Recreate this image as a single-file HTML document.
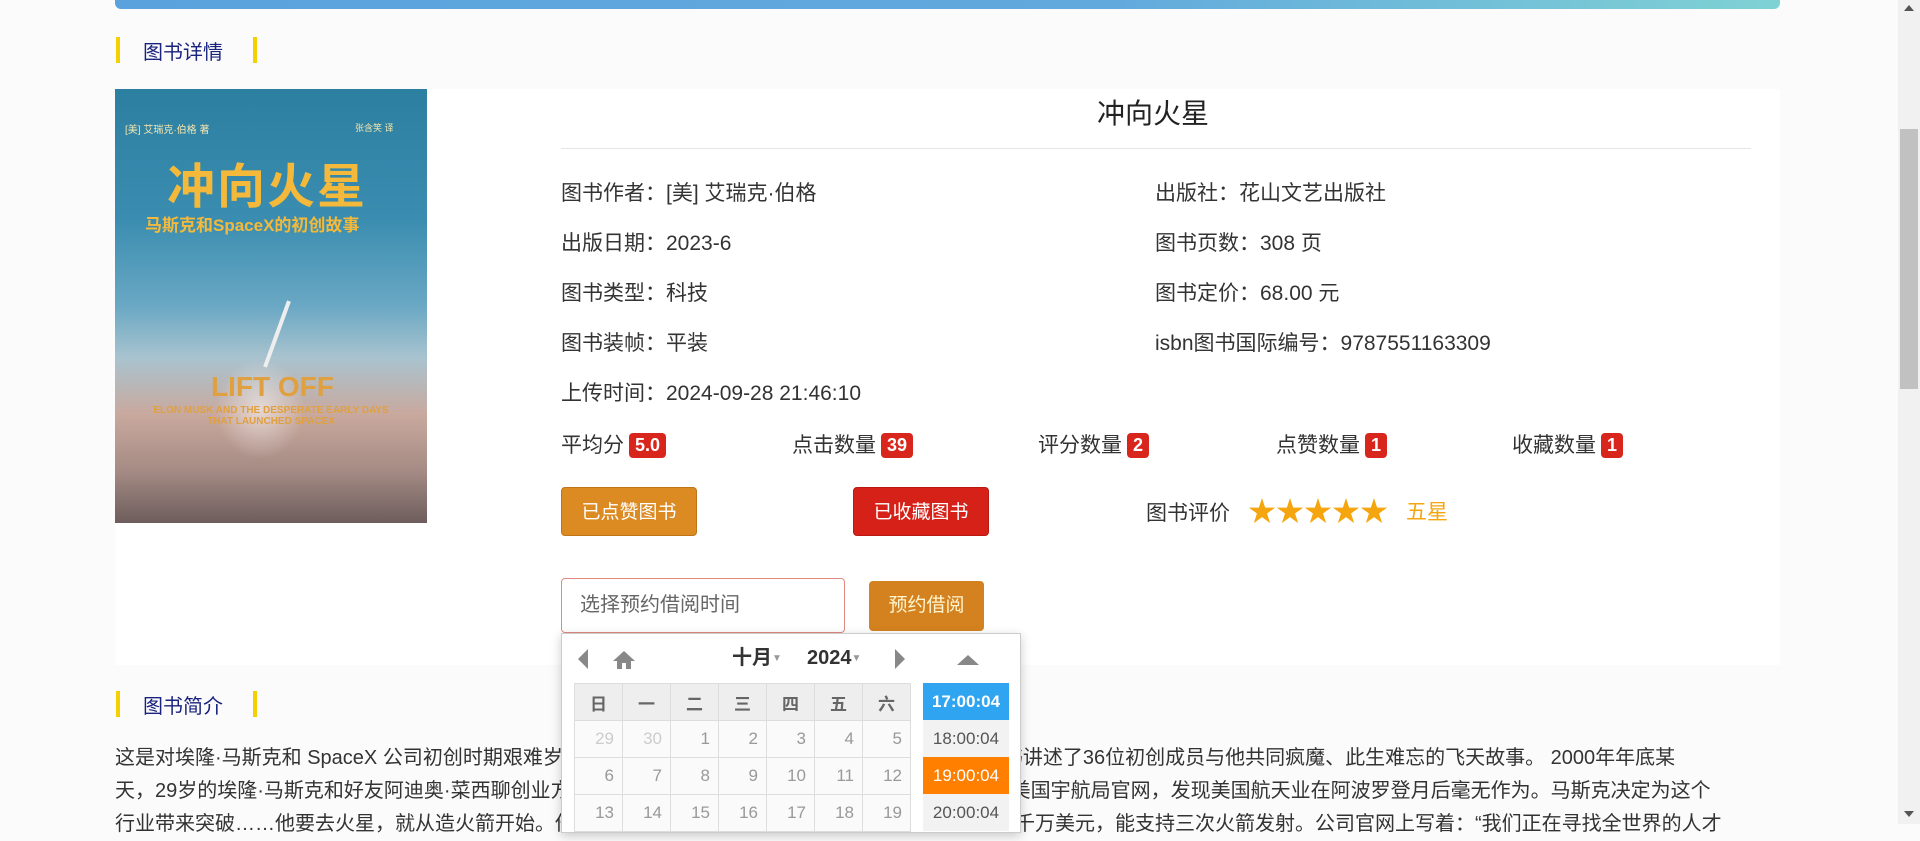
<!DOCTYPE html>
<html><head><meta charset="utf-8"><style>
*{margin:0;padding:0;box-sizing:border-box}
body{width:1920px;height:824px;overflow:hidden;background:#fbfbfb;font-family:"Liberation Sans","Noto Sans CJK SC",sans-serif;color:#333;position:relative}
.a{position:absolute}
.banner{left:115px;top:0;width:1665px;height:9px;background:linear-gradient(90deg,#5aa2dd,#62aadd 60%,#7fd2d4);border-radius:0 0 6px 6px}
.sec{font-size:20px;color:#1a237e}
.ybar{width:4px;height:26px;background:#f5d000}
.panel{left:115px;top:89px;width:1665px;height:576px;background:#fff}
.cover{left:115px;top:89px;width:312px;height:434px;background:linear-gradient(180deg,#2c7fa0 0%,#3a8db0 30%,#6aa8c4 50%,#a9c3cf 62%,#c9a99e 75%,#a58b84 88%,#6d5d5c 100%);overflow:hidden}
.info{font-size:21px;color:#333}
.badge{display:inline-block;background:#d9261c;color:#fff;font-weight:bold;font-size:18px;padding:2px 6px;border-radius:4px;margin-left:5px;vertical-align:1px}
.btn{color:#fff;font-size:19px;text-align:center;border-radius:4px}
.cal{left:561px;top:633px;width:460px;height:200px;background:#fff;border:1px solid #ccc;box-shadow:0 3px 10px rgba(0,0,0,.2)}
table{border-collapse:collapse;position:absolute;left:12px;top:49px}
td{width:48px;height:37px;border:1px solid #ddd;text-align:right;padding-right:8px;font-size:17px;color:#999;background:#fafafa}
th{width:48px;height:37px;border:1px solid #ddd;background:#eee;color:#666;font-size:17px}
.tm{position:absolute;left:361px;width:86px;height:37px;font-size:17px;text-align:center;line-height:37px;background:#f2f2f2;color:#555}
.para{font-size:20px;color:#333;left:115px;width:1665px;line-height:33px}
</style></head><body>
<div class="a banner"></div>
<div class="a ybar" style="left:116px;top:37px"></div>
<div class="a sec" style="left:143px;top:36px">图书详情</div>
<div class="a ybar" style="left:253px;top:37px"></div>
<div class="a panel"></div>
<div class="a cover">
<div class="a" style="left:10px;top:32px;color:#f3e6b0;font-size:10px">[美] 艾瑞克·伯格 著</div>
<div class="a" style="left:240px;top:32px;color:#f3e6b0;font-size:9px">张含笑 译</div>
<div class="a" style="left:52px;top:58px;color:#f4b93a;font-size:48px;font-weight:bold;letter-spacing:2px">冲向火星</div>
<div class="a" style="left:30px;top:122px;color:#f4b93a;font-size:17px;font-weight:bold">马斯克和SpaceX的初创故事</div>
<div class="a" style="left:160px;top:210px;width:4px;height:70px;background:#eee;transform:rotate(20deg)"></div>
<div class="a" style="left:100px;top:270px;width:90px;height:100px;background:radial-gradient(#fff8,transparent 70%)"></div>
<div class="a" style="left:96px;top:282px;color:#e0a040;font-size:28px;font-weight:bold">LIFT OFF</div>
<div class="a" style="left:20px;top:316px;color:#e0a040;font-size:10px;font-weight:bold;width:272px;text-align:center">ELON MUSK AND THE DESPERATE EARLY DAYS<br>THAT LAUNCHED SPACEX</div>
</div>
<div class="a" style="left:1097px;top:92px;font-size:28px;color:#222">冲向火星</div>
<div class="a" style="left:561px;top:148px;width:1190px;height:1px;background:#e5e5e5"></div>
<div class="a info" style="left:561px;top:177px">图书作者：[美] 艾瑞克·伯格</div>
<div class="a info" style="left:1155px;top:177px">出版社：花山文艺出版社</div>
<div class="a info" style="left:561px;top:227px">出版日期：2023-6</div>
<div class="a info" style="left:1155px;top:227px">图书页数：308 页</div>
<div class="a info" style="left:561px;top:277px">图书类型：科技</div>
<div class="a info" style="left:1155px;top:277px">图书定价：68.00 元</div>
<div class="a info" style="left:561px;top:327px">图书装帧：平装</div>
<div class="a info" style="left:1155px;top:327px">isbn图书国际编号：9787551163309</div>
<div class="a info" style="left:561px;top:377px">上传时间：2024-09-28 21:46:10</div>
<div class="a info" style="left:561px;top:429px">平均分<span class="badge">5.0</span></div>
<div class="a info" style="left:792px;top:429px">点击数量<span class="badge">39</span></div>
<div class="a info" style="left:1038px;top:429px">评分数量<span class="badge">2</span></div>
<div class="a info" style="left:1276px;top:429px">点赞数量<span class="badge">1</span></div>
<div class="a info" style="left:1512px;top:429px">收藏数量<span class="badge">1</span></div>
<div class="a btn" style="left:561px;top:487px;width:136px;height:49px;line-height:49px;background:#dc8a22;border:1px solid #c07418">已点赞图书</div>
<div class="a btn" style="left:853px;top:487px;width:136px;height:49px;line-height:49px;background:#d52118;border:1px solid #b81a12">已收藏图书</div>
<div class="a info" style="left:1146px;top:497px">图书评价</div>
<div class="a" style="left:1248px;top:490px;font-size:28px;color:#f5a50e">★★★★★</div>
<div class="a" style="left:1406px;top:496px;font-size:21px;color:#f5a50e">五星</div>
<div class="a" style="left:561px;top:578px;width:284px;height:55px;border:1px solid #e08a80;border-radius:4px;background:#fff;font-size:20px;color:#666;line-height:53px;padding-left:18px">选择预约借阅时间</div>
<div class="a btn" style="left:869px;top:581px;width:115px;height:50px;line-height:50px;background:#d4821f;color:#fff6d0">预约借阅</div>
<div class="a ybar" style="left:116px;top:691px"></div>
<div class="a sec" style="left:143px;top:690px">图书简介</div>
<div class="a ybar" style="left:253px;top:691px"></div>
<div class="a para" style="top:742px">这是对埃隆·马斯克和 SpaceX 公司初创时期艰难岁月的一次深度记录，作者走访了大量亲历者，这本书讲述了36位初创成员与他共同疯魔、此生难忘的飞天故事。 2000年年底某<br>天，29岁的埃隆·马斯克和好友阿迪奥·菜西聊创业方向，两人在纽约长岛的高速公路上驱车时，他登录美国宇航局官网，发现美国航天业在阿波罗登月后毫无作为。马斯克决定为这个<br>行业带来突破……他要去火星，就从造火箭开始。他为这家新公司投入了一亿美元，这笔钱在当时不过千万美元，能支持三次火箭发射。公司官网上写着：“我们正在寻找全世界的人才</div>
<div class="a cal">
<svg class="a" style="left:14px;top:14px" width="14" height="22"><path d="M12 1 L2 11 L12 21Z" fill="#888"/></svg>
<svg class="a" style="left:50px;top:16px" width="24" height="20"><path d="M12 1 L23 11 H19 V19 H14 V13 H10 V19 H5 V11 H1Z" fill="#888"/></svg>
<div class="a" style="left:170px;top:12px;font-size:20px;font-weight:bold;color:#333;line-height:24px">十月<span style="font-size:10px;color:#999;vertical-align:3px">▼</span></div>
<div class="a" style="left:245px;top:12px;font-size:20px;font-weight:bold;color:#333;line-height:24px">2024<span style="font-size:10px;color:#999;vertical-align:3px">▼</span></div>
<svg class="a" style="left:331px;top:14px" width="14" height="22"><path d="M2 1 L12 11 L2 21Z" fill="#888"/></svg>
<svg class="a" style="left:394px;top:20px" width="24" height="12"><path d="M1 11 L12 1 L23 11Z" fill="#888"/></svg>
<table><tr><th>日</th><th>一</th><th>二</th><th>三</th><th>四</th><th>五</th><th>六</th></tr>
<tr><td style="color:#ccc">29</td><td style="color:#ccc">30</td><td>1</td><td>2</td><td>3</td><td>4</td><td>5</td></tr>
<tr><td>6</td><td>7</td><td>8</td><td>9</td><td>10</td><td>11</td><td>12</td></tr>
<tr><td>13</td><td>14</td><td>15</td><td>16</td><td>17</td><td>18</td><td>19</td></tr></table>
<div class="tm" style="top:49px;background:#2fa4f0;color:#fff;font-weight:bold">17:00:04</div>
<div class="tm" style="top:86px">18:00:04</div>
<div class="tm" style="top:123px;background:#ff7f00;color:#fff">19:00:04</div>
<div class="tm" style="top:160px">20:00:04</div>
</div>
<div class="a" style="left:1898px;top:0;width:22px;height:824px;background:#f1f1f1"></div>
<div class="a" style="left:1900px;top:129px;width:18px;height:260px;background:#c1c1c1"></div>
<svg class="a" style="left:1903px;top:4px" width="12" height="8"><path d="M1 7 L6 1 L11 7Z" fill="#555"/></svg>
<svg class="a" style="left:1903px;top:810px" width="12" height="8"><path d="M1 1 L6 7 L11 1Z" fill="#555"/></svg>
</body></html>
